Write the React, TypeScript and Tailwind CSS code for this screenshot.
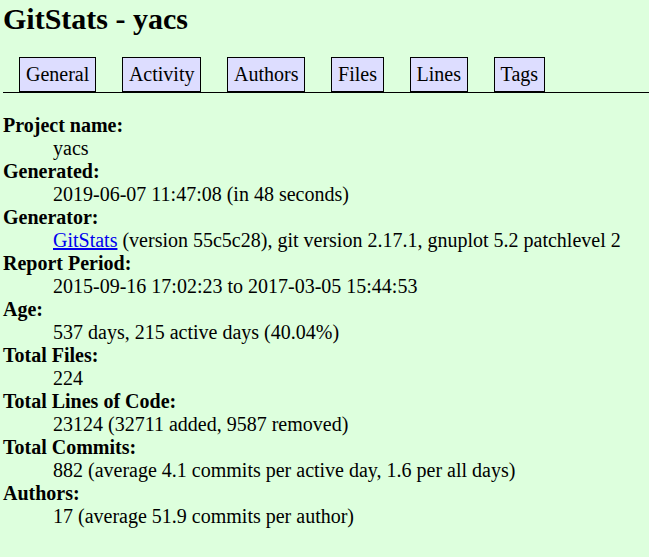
const tabs = ['General', 'Activity', 'Authors', 'Files', 'Lines', 'Tags']

type Row = { label: string; value: React.ReactNode }

const rows: Row[] = [
  { label: 'Project name:', value: 'yacs' },
  { label: 'Generated:', value: '2019-06-07 11:47:08 (in 48 seconds)' },
  {
    label: 'Generator:',
    value: (
      <>
        <a href="#" className="text-[#0000ee] underline">GitStats</a> (version 55c5c28), git version 2.17.1, gnuplot 5.2 patchlevel 2
      </>
    ),
  },
  { label: 'Report Period:', value: '2015-09-16 17:02:23 to 2017-03-05 15:44:53' },
  { label: 'Age:', value: '537 days, 215 active days (40.04%)' },
  { label: 'Total Files:', value: '224' },
  { label: 'Total Lines of Code:', value: '23124 (32711 added, 9587 removed)' },
  { label: 'Total Commits:', value: '882 (average 4.1 commits per active day, 1.6 per all days)' },
  { label: 'Authors:', value: '17 (average 51.9 commits per author)' },
]

export default function App() {
  return (
    <div className="min-h-screen bg-[#ddffdd] pl-[3px] font-['Liberation_Serif','Times_New_Roman',serif] text-[20px] leading-[23px] text-black">
      <h1 className="pt-[2px] text-[30px] font-bold leading-[34px] whitespace-nowrap">GitStats - yacs</h1>

      <div className="mt-[21px] flex gap-[25.6px] border-b border-black pl-[16px]">
        {tabs.map(tab => (
          <a
            key={tab}
            href="#"
            className="border border-black bg-[#ddddff] px-[6px] py-[5px] leading-[23px] text-black whitespace-nowrap"
          >
            {tab}
          </a>
        ))}
      </div>

      <dl className="mt-[21px]">
        {rows.map(row => (
          <div key={row.label}>
            <dt className="font-bold whitespace-nowrap">{row.label}</dt>
            <dd className="ml-[50px] whitespace-nowrap">{row.value}</dd>
          </div>
        ))}
      </dl>
    </div>
  )
}
